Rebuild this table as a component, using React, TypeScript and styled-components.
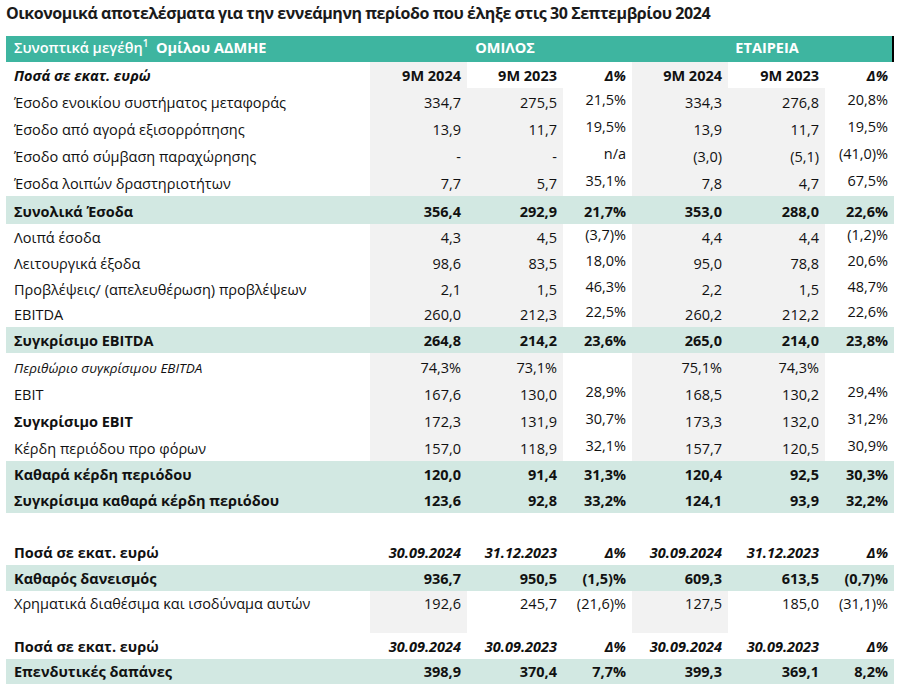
import React from "react";
import styled, { createGlobalStyle, css } from "styled-components";

const GlobalStyle = createGlobalStyle`
  html, body { margin: 0; padding: 0; background: #ffffff; }
  body { font-family: "Open Sans", "Noto Sans", sans-serif; color: #111111; }
`;

const TEAL = "#3eb5a0";
const BAND = "#d2e8e2";
const GRAY = "#f2f2f2";

const Page = styled.div`
  padding: 2px 6px 0 6px;
  width: 895px;
  box-sizing: border-box;
`;

const Title = styled.h1`
  margin: 0;
  height: 34px;
  font-size: 16px;
  font-weight: 700;
  line-height: 22px;
  color: #1a1a1a;
  letter-spacing: -0.45px;
`;

const Table = styled.table`
  border-collapse: collapse;
  table-layout: fixed;
  width: 888px;
`;

type RowKind = "head" | "plain" | "band" | "blank";

const Row = styled.tr<{ $kind: RowKind; $h: number }>`
  height: ${(p) => p.$h}px;
  background: ${(p) =>
    p.$kind === "head" ? TEAL : p.$kind === "band" ? BAND : "#ffffff"};
`;

const HeadCell = styled.th<{ $edge?: boolean; $center?: boolean }>`
  padding: 0 0 2px 8px;
  text-align: ${(p) => (p.$center ? "center" : "left")};
  vertical-align: middle;
  color: #ffffff;
  font-size: 14.5px;
  font-weight: 700;
  line-height: 18px;
  white-space: pre;
  ${(p) =>
    p.$edge &&
    css`
      box-shadow: inset -2px 0 0 #000000;
    `}
`;

const Sup = styled.sup`
  font-size: 10px;
  line-height: 0;
  vertical-align: 6px;
`;

const Light = styled.span`
  font-weight: 600;
`;

const Cell = styled.td<{
  $shade?: boolean;
  $label?: boolean;
  $bold?: boolean;
  $italic?: boolean;
  $delta?: boolean;
  $small?: boolean;
  $top?: boolean;
}>`
  padding: ${(p) =>
    p.$top
      ? "4px 6px 0 8px"
      : `0 6px ${p.$delta ? 6 : 3}px ${p.$label ? 8 : 0}px`};
  text-align: ${(p) => (p.$label ? "left" : "right")};
  vertical-align: ${(p) => (p.$top ? "top" : "bottom")};
  background: ${(p) => (p.$shade ? GRAY : "transparent")};
  font-size: ${(p) => (p.$small ? 13.5 : 14.5)}px;
  line-height: 18px;
  font-weight: ${(p) => (p.$bold ? 700 : 400)};
  font-style: ${(p) => (p.$italic ? "italic" : "normal")};
  white-space: nowrap;
  color: #111111;
`;

type DataRow = {
  label: string;
  v: string[];
  h: number;
  band?: boolean;
  labelBold?: boolean;
  note?: boolean;
};

const section1: DataRow[] = [
  { label: "Έσοδο ενοικίου συστήματος μεταφοράς", v: ["334,7", "275,5", "21,5%", "334,3", "276,8", "20,8%"], h: 27 },
  { label: "Έσοδο από αγορά εξισορρόπησης", v: ["13,9", "11,7", "19,5%", "13,9", "11,7", "19,5%"], h: 27 },
  { label: "Έσοδο από σύμβαση παραχώρησης", v: ["-", "-", "n/a", "(3,0)", "(5,1)", "(41,0)%"], h: 27 },
  { label: "Έσοδα λοιπών δραστηριοτήτων", v: ["7,7", "5,7", "35,1%", "7,8", "4,7", "67,5%"], h: 27 },
  { label: "Συνολικά Έσοδα", band: true, v: ["356,4", "292,9", "21,7%", "353,0", "288,0", "22,6%"], h: 28 },
  { label: "Λοιπά έσοδα", v: ["4,3", "4,5", "(3,7)%", "4,4", "4,4", "(1,2)%"], h: 26 },
  { label: "Λειτουργικά έξοδα", v: ["98,6", "83,5", "18,0%", "95,0", "78,8", "20,6%"], h: 26 },
  { label: "Προβλέψεις/ (απελευθέρωση) προβλέψεων", v: ["2,1", "1,5", "46,3%", "2,2", "1,5", "48,7%"], h: 26 },
  { label: "EBITDA", v: ["260,0", "212,3", "22,5%", "260,2", "212,2", "22,6%"], h: 25 },
  { label: "Συγκρίσιμο EBITDA", band: true, v: ["264,8", "214,2", "23,6%", "265,0", "214,0", "23,8%"], h: 26 },
  { label: "Περιθώριο συγκρίσιμου EBITDA", note: true, v: ["74,3%", "73,1%", "", "75,1%", "74,3%", ""], h: 27 },
  { label: "EBIT", v: ["167,6", "130,0", "28,9%", "168,5", "130,2", "29,4%"], h: 27 },
  { label: "Συγκρίσιμο EBIT", labelBold: true, v: ["172,3", "131,9", "30,7%", "173,3", "132,0", "31,2%"], h: 27 },
  { label: "Κέρδη περιόδου προ φόρων", v: ["157,0", "118,9", "32,1%", "157,7", "120,5", "30,9%"], h: 27 },
  { label: "Καθαρά κέρδη περιόδου", band: true, v: ["120,0", "91,4", "31,3%", "120,4", "92,5", "30,3%"], h: 26 },
  { label: "Συγκρίσιμα καθαρά κέρδη περιόδου", band: true, v: ["123,6", "92,8", "33,2%", "124,1", "93,9", "32,2%"], h: 26 },
];

const colWidths = [364, 97, 96, 69, 96, 97, 69];

const LABEL_PERIOD = "Ποσά σε εκατ. ευρώ";

function Section1Rows() {
  return (
    <>
      {section1.map((r) => (
        <Row key={r.label} $kind={r.band ? "band" : "plain"} $h={r.h}>
          <Cell $label $bold={r.band || r.labelBold} $italic={r.note} $small={r.note}>
            {r.label}
          </Cell>
          {r.v.map((val, i) => (
            <Cell
              key={i}
              $shade={!r.band && i !== 2 && i !== 5}
              $bold={r.band}
              $delta={!r.band && (i === 2 || i === 5)}
            >
              {val}
            </Cell>
          ))}
        </Row>
      ))}
    </>
  );
}

function DateHeaderRow({ dates }: { dates: string[] }) {
  return (
    <Row $kind="plain" $h={26}>
      <Cell $label $bold>
        {LABEL_PERIOD}
      </Cell>
      {dates.map((d, i) => (
        <Cell key={i} $bold $italic>
          {d}
        </Cell>
      ))}
    </Row>
  );
}

function BandRow({ label, v, h }: { label: string; v: string[]; h: number }) {
  return (
    <Row $kind="band" $h={h}>
      <Cell $label $bold>
        {label}
      </Cell>
      {v.map((val, i) => (
        <Cell key={i} $bold>
          {val}
        </Cell>
      ))}
    </Row>
  );
}

export default function App() {
  return (
    <>
      <GlobalStyle />
      <Page>
        <Title>
          Οικονομικά αποτελέσματα για την εννεάμηνη περίοδο που έληξε στις 30 Σεπτεμβρίου 2024
        </Title>
        <Table>
          <colgroup>
            {colWidths.map((w, i) => (
              <col key={i} style={{ width: w }} />
            ))}
          </colgroup>
          <thead>
            <Row $kind="head" $h={26}>
              <HeadCell>
                <Light>
                  Συνοπτικά μεγέθη<Sup>1</Sup>
                </Light>
                {"  Ομίλου ΑΔΜΗΕ"}
              </HeadCell>
              <HeadCell colSpan={3} $center>
                ΟΜΙΛΟΣ
              </HeadCell>
              <HeadCell colSpan={3} $center $edge>
                ΕΤΑΙΡΕΙΑ
              </HeadCell>
            </Row>
          </thead>
          <tbody>
            <Row $kind="plain" $h={26}>
              <Cell $label $bold $italic>
                {LABEL_PERIOD}
              </Cell>
              <Cell $shade $bold>9M 2024</Cell>
              <Cell $bold>9M 2023</Cell>
              <Cell $bold $italic>Δ%</Cell>
              <Cell $shade $bold>9M 2024</Cell>
              <Cell $bold>9M 2023</Cell>
              <Cell $bold $italic>Δ%</Cell>
            </Row>
            <Section1Rows />
            <Row $kind="blank" $h={26}>
              <Cell colSpan={7} />
            </Row>
            <DateHeaderRow dates={["30.09.2024", "31.12.2023", "Δ%", "30.09.2024", "31.12.2023", "Δ%"]} />
            <BandRow label="Καθαρός δανεισμός" v={["936,7", "950,5", "(1,5)%", "609,3", "613,5", "(0,7)%"]} h={26} />
            <Row $kind="plain" $h={42}>
              <Cell $label $top>Χρηματικά διαθέσιμα και ισοδύναμα αυτών</Cell>
              <Cell $shade $top>192,6</Cell>
              <Cell $top>245,7</Cell>
              <Cell $top>(21,6)%</Cell>
              <Cell $shade $top>127,5</Cell>
              <Cell $top>185,0</Cell>
              <Cell $top>(31,1)%</Cell>
            </Row>
            <DateHeaderRow dates={["30.09.2024", "30.09.2023", "Δ%", "30.09.2024", "30.09.2023", "Δ%"]} />
            <BandRow label="Επενδυτικές δαπάνες" v={["398,9", "370,4", "7,7%", "399,3", "369,1", "8,2%"]} h={25} />
          </tbody>
        </Table>
      </Page>
    </>
  );
}
